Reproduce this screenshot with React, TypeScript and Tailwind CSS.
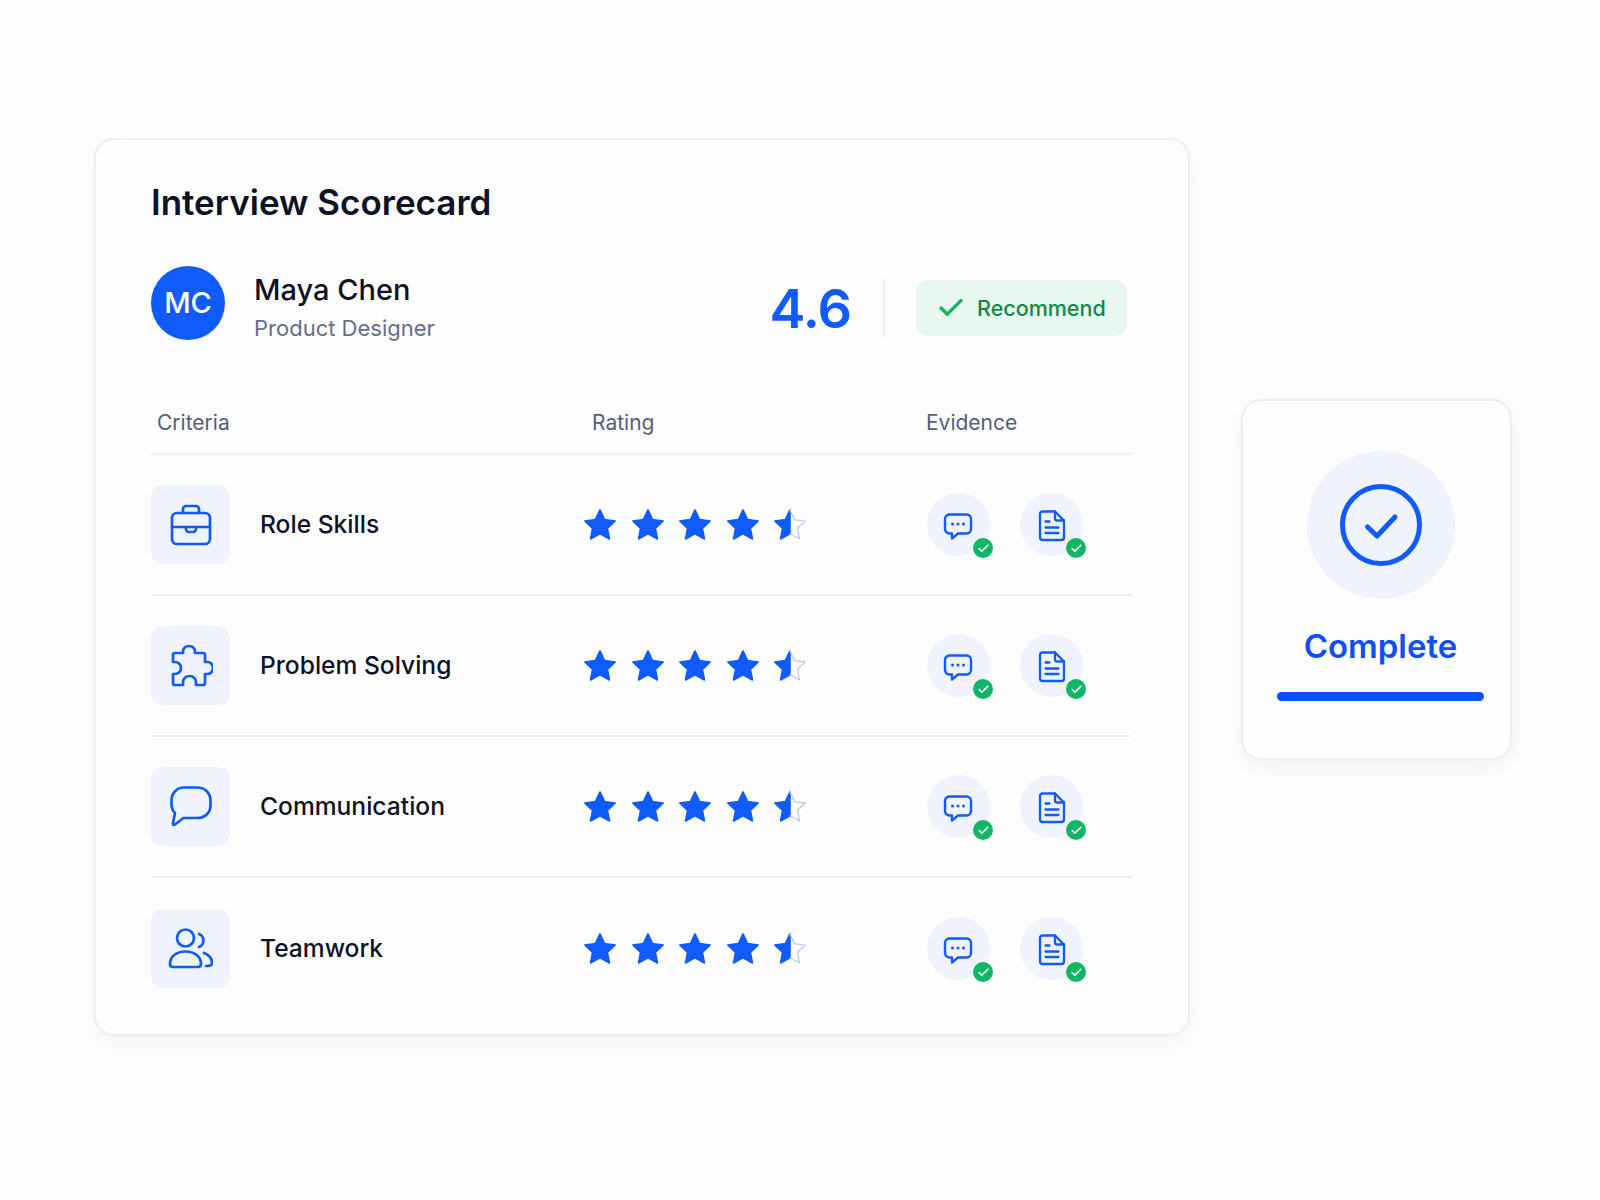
import React from 'react';
import { Check } from 'lucide-react';

const BLUE = '#0f5bfb';

function Star() {
  return (
    <svg width="38" height="38" viewBox="0 0 24 24" fill={BLUE} stroke={BLUE} strokeWidth="1" strokeLinejoin="round">
      <polygon points="12 2.5 14.9 8.6 21.6 9.5 16.7 14.1 18 20.8 12 17.5 6 20.8 7.3 14.1 2.4 9.5 9.1 8.6" />
    </svg>
  );
}

function HalfStar() {
  return (
    <svg width="38" height="38" viewBox="0 0 24 24" strokeLinejoin="round" strokeLinecap="round">
      <polygon points="12 2.5 9.1 8.6 2.4 9.5 7.3 14.1 6 20.8 12 17.5" fill={BLUE} stroke={BLUE} strokeWidth="1" />
      <polyline points="12 2.5 14.9 8.6 21.6 9.5 16.7 14.1 18 20.8 12 17.5" fill="none" stroke="#b7caf9" strokeWidth="0.8" />
    </svg>
  );
}

function BriefcaseIcon() {
  return (
    <svg width="42" height="42" viewBox="0 0 42 42" fill="none" stroke={BLUE} strokeWidth="2.7" strokeLinecap="round" strokeLinejoin="round">
      <rect x="2" y="9" width="38" height="31" rx="5" />
      <path d="M13 9V5a3 3 0 0 1 3-3h10a3 3 0 0 1 3 3v4" />
      <path d="M2 23H40" />
      <path d="M16 23v2a3 3 0 0 0 3 3h4a3 3 0 0 0 3-3v-2" />
    </svg>
  );
}

function PuzzleIcon() {
  return (
    <svg width="44" height="44" viewBox="-3 0 44 44" fill="none" stroke={BLUE} strokeWidth="2.7" strokeLinecap="round" strokeLinejoin="round">
      <path d="M3 9H11V7.5a6 5.5 0 0 1 12 0V9H31a2 2 0 0 1 2 2V18H35.5a5.5 6 0 0 1 0 12H33V39a2 2 0 0 1-2 2H24V38a6.5 6 0 0 0-13 0V41H3a2 2 0 0 1-2-2V30H3a6 6 0 0 0 0-12H1V11a2 2 0 0 1 2-2Z" />
    </svg>
  );
}

function BubbleIcon() {
  return (
    <svg width="42" height="42" viewBox="0 0 42 42" fill="none" stroke={BLUE} strokeWidth="2.7" strokeLinecap="round" strokeLinejoin="round">
      <path d="M14 1.5H27C35 1.5 40.5 7 40.5 14.5V19C40.5 27 35 32 27 32H13.5L5 38.5C3.5 39.5 2.5 38.5 3 37L5 27C2.5 24.5 1.5 21.5 1.5 18V14.5C1.5 7 7 1.5 14 1.5Z" />
    </svg>
  );
}

function UsersIcon() {
  return (
    <svg width="45" height="42" viewBox="0 0 45 42" fill="none" stroke={BLUE} strokeWidth="2.7" strokeLinecap="round" strokeLinejoin="round">
      <circle cx="17.5" cy="10" r="8.5" />
      <path d="M2 36C2 28 9 23.5 17.5 23.5C26 23.5 33 28 33 36C33 38 32 39 30 39H5C3 39 2 38 2 36Z" />
      <path d="M31 6a7 7 0 0 1 0 13" />
      <path d="M36 25C41 27 44 31 44 35C44 37 43 38 38 38" />
    </svg>
  );
}

function ChatSmall() {
  return (
    <svg width="30" height="30" viewBox="0 0 30 30" fill="none" stroke={BLUE} strokeWidth="2.4" strokeLinecap="round" strokeLinejoin="round" className="mt-[4px] mr-[1px]">
      <path d="M6.5 2.5H23.5C26 2.5 28 4.5 28 7V17C28 19.5 26 21.5 23.5 21.5H15L9 26.5V21.5H6.5C4 21.5 2 19.5 2 17V7C2 4.5 4 2.5 6.5 2.5Z" />
      <circle cx="9.5" cy="12" r="1.5" fill={BLUE} stroke="none" />
      <circle cx="15" cy="12" r="1.5" fill={BLUE} stroke="none" />
      <circle cx="20.5" cy="12" r="1.5" fill={BLUE} stroke="none" />
    </svg>
  );
}

function DocSmall() {
  return (
    <svg width="28" height="32" viewBox="0 0 28 32" fill="none" stroke={BLUE} strokeWidth="2.3" strokeLinecap="round" strokeLinejoin="round" className="mt-[2px]">
      <path d="M4.5 1.5H17L26 10.5V27.5C26 29 25 30 23.5 30H4.5C3 30 2 29 2 27.5V4C2 2.5 3 1.5 4.5 1.5Z" />
      <path d="M17 1.5V8.5C17 9.5 18 10.5 19 10.5H26" />
      <path d="M7.5 11.5H11.5M7.5 17.5H20.5M7.5 23H20.5" />
    </svg>
  );
}

function EvidenceBadge({ children }: { children: React.ReactNode }) {
  return (
    <div className="relative w-[63px] h-[63px] rounded-full bg-[#f0f3fd] flex items-center justify-center">
      {children}
      <div className="absolute right-[-3px] bottom-[-2px] w-[20px] h-[20px] rounded-full bg-[#10b566] flex items-center justify-center">
        <Check className="w-[13px] h-[13px] text-white" strokeWidth={3} />
      </div>
    </div>
  );
}

const rows = [
  { name: 'Role Skills', icon: <BriefcaseIcon /> },
  { name: 'Problem Solving', icon: <PuzzleIcon /> },
  { name: 'Communication', icon: <BubbleIcon /> },
  { name: 'Teamwork', icon: <UsersIcon /> },
];

export default function App() {
  return (
    <div className="min-h-screen w-full bg-[#fefefe] font-['Inter',sans-serif] flex items-start pl-[94px] pt-[138px]">
      <div className="w-[1096px] h-[898px] shrink-0 rounded-[20px] border-2 border-[#eeeff2] bg-[#fdfdfe] shadow-[0_8px_24px_rgba(30,40,80,0.05)] pl-[55px] pr-[57px] pt-[40px]">
        <h1 className="text-[35px] leading-[44px] font-semibold text-[#0d1226]">Interview Scorecard</h1>

        <div className="flex items-center mt-[42px] h-[78px]">
          <div className="w-[74px] h-[74px] mb-[4px] rounded-full bg-[#0f5bfb] flex items-center justify-center text-white text-[29px] font-medium">MC</div>
          <div className="ml-[29px] mt-[4px] flex-1">
            <div className="text-[29px] leading-[38px] font-medium text-[#0d1226]">Maya Chen</div>
            <div className="mt-[4px] text-[22px] leading-[30px] text-[#666d8c]">Product Designer</div>
          </div>
          <div className="mt-[6px] flex items-center">
            <div className="text-[54px] font-semibold text-[#0f5bfb] tracking-[-1px]">4.6</div>
            <div className="w-[2px] h-[58px] bg-[#eeeff2] ml-[32px] mr-[31px]"></div>
            <div className="w-[211px] h-[56px] mr-[4px] rounded-[12px] bg-[#e8f7ef] flex items-center pl-[20px] gap-[11px] text-[21.5px] font-medium text-[#0c8a45]">
              <Check className="w-[30px] h-[30px] text-[#13b160]" strokeWidth={2.6} />
              Recommend
            </div>
          </div>
        </div>

        <div className="grid grid-cols-[435px_334px_1fr] mt-[65px] pb-[16px] pl-[6px] border-b-2 border-[#eeeff2] text-[21px] leading-[28px] text-[#575d7c]">
          <div>Criteria</div>
          <div>Rating</div>
          <div>Evidence</div>
        </div>

        {rows.map((row, i) => (
          <div key={row.name} className={`grid grid-cols-[430px_346px_1fr] items-center h-[141px] ${i < rows.length - 1 ? 'border-b-2 border-[#eeeff2]' : ''}`}>
            <div className="flex items-center gap-[30px]">
              <div className="w-[79px] h-[79px] rounded-[12px] bg-[#f0f3fd] flex items-center justify-center">{row.icon}</div>
              <div className="text-[24.6px] font-medium text-[#0d1226]">{row.name}</div>
            </div>
            <div className="flex items-center gap-[9.5px]">
              <Star />
              <Star />
              <Star />
              <Star />
              <HalfStar />
            </div>
            <div className="flex items-center gap-[30px]">
              <EvidenceBadge><ChatSmall /></EvidenceBadge>
              <EvidenceBadge><DocSmall /></EvidenceBadge>
            </div>
          </div>
        ))}
      </div>

      <div className="ml-[51px] mt-[261px] w-[271px] h-[361px] shrink-0 rounded-[20px] border-2 border-[#eeeff2] bg-[#fdfdfe] shadow-[0_8px_24px_rgba(30,40,80,0.06)] flex flex-col items-center pt-[50px] pl-[8px]">
        <div className="w-[148px] h-[148px] rounded-full bg-[#f0f3fd] flex items-center justify-center">
          <svg width="84" height="84" viewBox="0 0 84 84" fill="none" stroke={BLUE} strokeLinecap="round" strokeLinejoin="round">
            <circle cx="42" cy="42" r="38.5" strokeWidth="5" />
            <path d="M28.5 44L38 53L56 34" strokeWidth="5" />
          </svg>
        </div>
        <div className="mt-[24px] text-[33px] leading-[46px] font-semibold text-[#0f4ffb]">Complete</div>
        <div className="mt-[23px] w-[207px] h-[9px] rounded-full bg-[#0f4ffb]"></div>
      </div>
    </div>
  );
}
